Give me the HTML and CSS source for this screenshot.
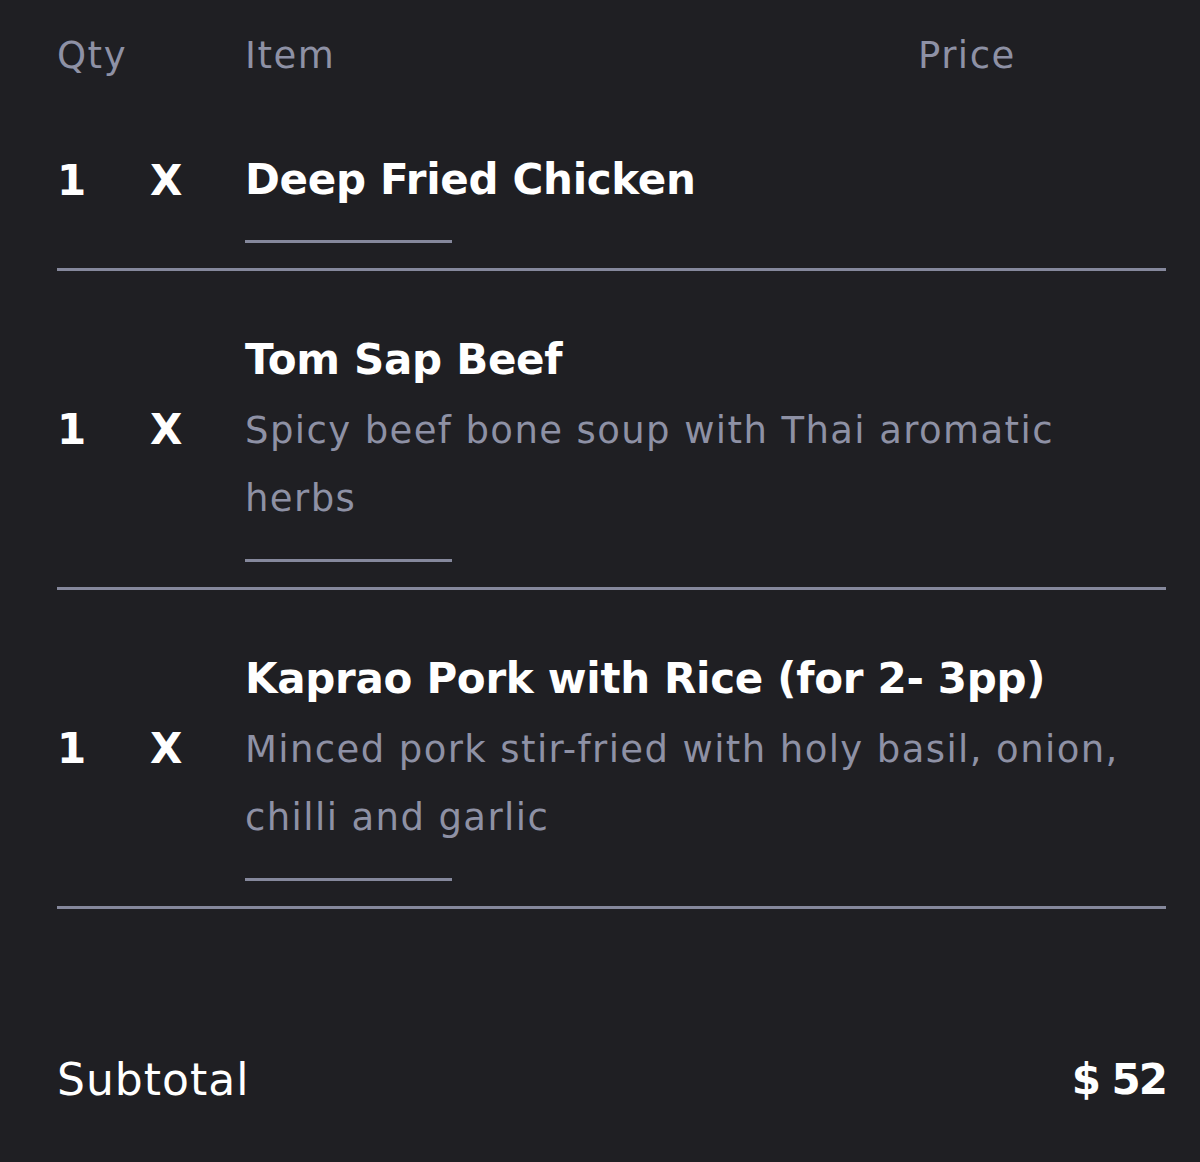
FILE: index.html
```html
<!DOCTYPE html>
<html lang="en">
<head>
  <meta charset="UTF-8" />
  <title>Order summary</title>
  <link rel="stylesheet" href="styles.css">
</head>
<body>
  <div class="cart">
    <!-- header -->
    <div class="cart-head">
      <span class="col-qty">Qty</span>
      <span class="col-item">Item</span>
      <span class="col-price">Price</span>
    </div>

    <!-- lines -->
    <div class="line">
      <div class="line-main">
        <div class="qty"><span class="num">1</span><span class="times">X</span></div>
        <div class="item">
          <div class="name">Deep Fried Chicken</div>
        </div>
      </div>
      <div class="rule-short"></div>
    </div>

    <div class="line">
      <div class="line-main">
        <div class="qty"><span class="num">1</span><span class="times">X</span></div>
        <div class="item">
          <div class="name">Tom Sap Beef</div>
          <div class="desc">Spicy beef bone soup with Thai aromatic herbs</div>
        </div>
      </div>
      <div class="rule-short"></div>
    </div>

    <div class="line">
      <div class="line-main">
        <div class="qty"><span class="num">1</span><span class="times">X</span></div>
        <div class="item">
          <div class="name">Kaprao Pork with Rice (for 2- 3pp)</div>
          <div class="desc">Minced pork stir-fried with holy basil, onion, chilli and garlic</div>
        </div>
      </div>
      <div class="rule-short"></div>
    </div>

    <div class="subtotal">
      <span class="sub-label">Subtotal</span>
      <span class="sub-value">$ 52</span>
    </div>
  </div>
</body>
</html>
```

FILE: styles.css
```css
html, body {
  margin: 0;
  background: #1f1f23;
}

body {
  font-family: "DejaVu Sans", sans-serif;
  color: #ffffff;
}

.cart {
  padding: 20px 34px 0 57px;
}

.cart-head {
  display: flex;
  font-size: 37px;
  line-height: 72px;
  color: #8e91a5;
  letter-spacing: 1.5px;
}

.col-qty {
  width: 188px;
}

.col-item {
  flex: 1;
}

.col-price {
  width: 248px;
}

.line {
  padding-top: 55px;
  border-bottom: 3px solid #85889c;
}

.cart-head + .line {
  padding-top: 54px;
}

.line-main {
  display: flex;
  align-items: center;
}

.qty {
  width: 188px;
  flex-shrink: 0;
  display: flex;
  font-size: 42px;
  font-weight: bold;
}

.qty .num {
  width: 93px;
}

.item {
  max-width: 880px;
}

.name {
  font-size: 42px;
  font-weight: bold;
  line-height: 68px;
  letter-spacing: -0.3px;
}

.desc {
  margin-top: 3px;
  font-size: 37px;
  line-height: 68px;
  letter-spacing: 1.4px;
  color: #8e91a5;
}

.rule-short {
  width: 207px;
  height: 3px;
  background: #85889c;
  margin: 26px 0 25px 188px;
}

.subtotal {
  display: flex;
  justify-content: space-between;
  margin-top: 137px;
  font-size: 44px;
  line-height: 68px;
}

.sub-label {
  letter-spacing: 1px;
}

.sub-value {
  font-size: 42px;
  font-weight: bold;
  letter-spacing: -2px;
}
```
